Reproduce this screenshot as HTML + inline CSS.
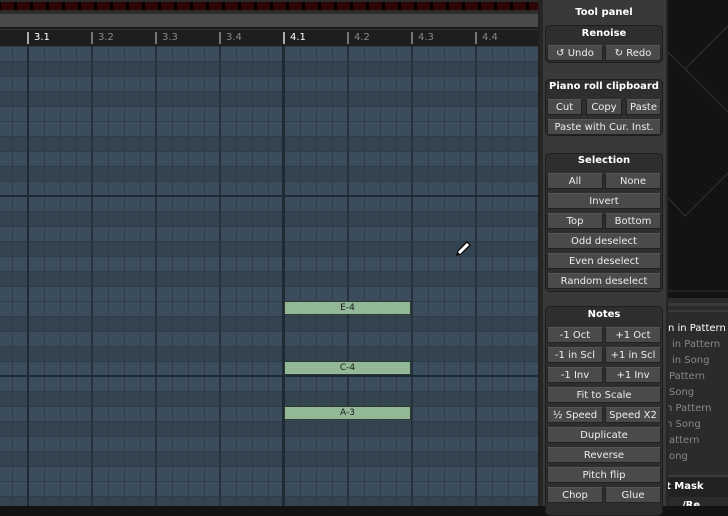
<!DOCTYPE html>
<html><head><style>
*{margin:0;padding:0;box-sizing:border-box}
body{width:728px;height:506px;overflow:hidden;background:#121312;font-family:"DejaVu Sans","Liberation Sans",sans-serif;position:relative}
.a{position:absolute}
#grid{left:0;top:46px;width:538px;height:460px;
background:
linear-gradient(#1e2a33,#1e2a33) 0 149px/100% 2px no-repeat,
linear-gradient(#1e2a33,#1e2a33) 0 329px/100% 2px no-repeat,
repeating-linear-gradient(90deg,transparent 0 282px,#1f2b34 282px 284px,transparent 284px 538px),
linear-gradient(90deg,#1f2b34 0 2px,transparent 2px) 27px 0/256px 100% repeat-x,
linear-gradient(90deg,#26323c 0 2px,transparent 2px) 27px 0/64px 100%,
linear-gradient(90deg,#2f3d49 0 1px,transparent 1px) 12px 0/16px 100%,
linear-gradient(#2f3d49 0 1px,transparent 1px) 0 0/100% 15px,
linear-gradient(#3b4d5c 0 15px,#334350 15px 30px,#3b4d5c 30px 45px,#334350 45px 60px,#3b4d5c 60px 75px,#334350 75px 90px,#3b4d5c 90px 120px,#334350 120px 135px,#3b4d5c 135px 150px,#334350 150px 165px,#3b4d5c 165px 180px) 0 150px/100% 180px;}
.note{position:absolute;left:284px;width:127px;height:14px;background:#93b898;border:1px solid #2a3a30;font-size:9px;color:#1a1a1a;text-align:center;line-height:13px;font-family:"DejaVu Sans",sans-serif}
.rl{position:absolute;top:32px;font-size:10px;color:#888}
.tk{position:absolute;top:32px;width:2px;height:12px;background:#777}
#panel{left:540px;top:0;width:128px;height:506px;background:#393939;border-left:3px solid #262626;border-right:2px solid #262626}
.box{position:absolute;left:545px;width:118px;background:#2e2e2e;border:1px solid #1e1e1e;border-radius:5px}
.t{position:absolute;left:545px;width:118px;text-align:center;color:#fff;font-weight:bold;font-size:10px}
.b{position:absolute;height:16px;background:#4a4a4a;border:1px solid #222;border-top-color:#555;color:#eee;font-size:10px;text-align:center;line-height:15px;white-space:nowrap;overflow:hidden}
.li{position:absolute;font-size:10px;color:#888;white-space:nowrap}
#pc{position:absolute;left:0;top:2px;width:728px;height:506px}
</style></head><body>
<div class="a" style="left:0;top:0;width:540px;height:12px;background:#2a2a2a"></div>
<div class="a" style="left:0;top:2px;width:540px;height:8px;background:repeating-linear-gradient(90deg,#000 0 1px,#300505 1px 14px,#000 14px 16px)"></div>
<div class="a" style="left:0;top:12px;width:540px;height:17px;background:#4a4a4a;border-top:2px solid #303030;border-bottom:2px solid #1a1a1a"></div>
<div class="a" style="left:0;top:29px;width:540px;height:17px;background:#1c1e1f;border-top:1px solid #333"></div>
<div class="tk" style="left:27px;background:#aaa"></div><div class="rl" style="left:34px;color:#fff">3.1</div>
<div class="tk" style="left:91px"></div><div class="rl" style="left:98px">3.2</div>
<div class="tk" style="left:155px"></div><div class="rl" style="left:162px">3.3</div>
<div class="tk" style="left:219px"></div><div class="rl" style="left:226px">3.4</div>
<div class="tk" style="left:283px;background:#aaa"></div><div class="rl" style="left:290px;color:#fff">4.1</div>
<div class="tk" style="left:347px"></div><div class="rl" style="left:354px">4.2</div>
<div class="tk" style="left:411px"></div><div class="rl" style="left:418px">4.3</div>
<div class="tk" style="left:475px"></div><div class="rl" style="left:482px">4.4</div>
<div id="grid" class="a"></div>
<div class="note" style="top:301px">E-4</div>
<div class="note" style="top:361px">C-4</div>
<div class="note" style="top:406px">A-3</div>
<svg class="a" style="left:454px;top:240px" width="18" height="18" viewBox="0 0 18 18"><path d="M3 15 L4 11 L13 2 L16 5 L7 14 Z" fill="#fff" stroke="#000" stroke-width="1.2"/><path d="M3 15 L5 13" stroke="#000"/></svg>
<div class="a" style="left:538px;top:0;width:2px;height:506px;background:#222"></div>
<div id="panel" class="a"></div>
<div id="pc">
<div class="t" style="top:5px">Tool panel</div>
<div class="box" style="top:23px;height:38px"></div><div class="t" style="top:26px">Renoise</div>
<div class="b" style="left:547px;top:43px;width:56px">↺ Undo</div><div class="b" style="left:605px;top:43px;width:56px">↻ Redo</div>
<div class="box" style="top:77px;height:57px"></div><div class="t" style="top:79px">Piano roll clipboard</div>
<div class="b" style="left:547px;top:97px;width:35px">Cut</div><div class="b" style="left:586px;top:97px;width:36px">Copy</div><div class="b" style="left:626px;top:97px;width:35px">Paste</div>
<div class="b" style="left:547px;top:117px;width:114px">Paste with Cur. Inst.</div>
<div class="box" style="top:151px;height:139px"></div><div class="t" style="top:153px">Selection</div>
<div class="b" style="left:547px;top:171px;width:56px">All</div><div class="b" style="left:605px;top:171px;width:56px">None</div>
<div class="b" style="left:547px;top:191px;width:114px">Invert</div>
<div class="b" style="left:547px;top:211px;width:56px">Top</div><div class="b" style="left:605px;top:211px;width:56px">Bottom</div>
<div class="b" style="left:547px;top:231px;width:114px">Odd deselect</div>
<div class="b" style="left:547px;top:251px;width:114px">Even deselect</div>
<div class="b" style="left:547px;top:271px;width:114px">Random deselect</div>
<div class="box" style="top:304px;height:210px"></div><div class="t" style="top:307px">Notes</div>
<div class="b" style="left:547px;top:325px;width:56px">-1 Oct</div><div class="b" style="left:605px;top:325px;width:56px">+1 Oct</div>
<div class="b" style="left:547px;top:345px;width:56px">-1 in Scl</div><div class="b" style="left:605px;top:345px;width:56px">+1 in Scl</div>
<div class="b" style="left:547px;top:365px;width:56px">-1 Inv</div><div class="b" style="left:605px;top:365px;width:56px">+1 Inv</div>
<div class="b" style="left:547px;top:385px;width:114px">Fit to Scale</div>
<div class="b" style="left:547px;top:405px;width:56px">½ Speed</div><div class="b" style="left:605px;top:405px;width:56px">Speed X2</div>
<div class="b" style="left:547px;top:425px;width:114px">Duplicate</div>
<div class="b" style="left:547px;top:445px;width:114px">Reverse</div>
<div class="b" style="left:547px;top:465px;width:114px">Pitch flip</div>
<div class="b" style="left:547px;top:485px;width:56px">Chop</div><div class="b" style="left:605px;top:485px;width:56px">Glue</div>
</div>
<svg class="a" style="left:668px;top:0" width="60" height="295"><path d="M0 52 L17 69 L60 26 M17 69 L60 112 M0 198 L17 216 L60 173" stroke="#333" fill="none"/><line x1="0" y1="291" x2="60" y2="291" stroke="#333"/></svg>
<div class="a" style="left:668px;top:298px;width:60px;height:208px;background:#2b2b2b;overflow:hidden">
<div class="a" style="left:0;top:5px;width:60px;height:3px;background:#3a3a3a"></div>
<div class="a" style="left:0;top:12px;width:60px;height:2px;background:#3a3a3a"></div>
<div class="li" style="left:0;top:25px;color:#fff">n in Pattern</div>
<div class="li" style="left:4px;top:41px">in Pattern</div>
<div class="li" style="left:4px;top:57px">in Song</div>
<div class="li" style="left:1px;top:73px">Pattern</div>
<div class="li" style="left:1px;top:89px">Song</div>
<div class="li" style="left:-2px;top:105px">n Pattern</div>
<div class="li" style="left:-2px;top:121px">n Song</div>
<div class="li" style="left:1px;top:137px">attern</div>
<div class="li" style="left:1px;top:153px">ong</div>
<div class="a" style="left:0;top:177px;width:60px;height:22px;background:#222;border-top:2px solid #3a3a3a"></div>
<div class="li" style="left:-2px;top:183px;color:#fff;font-weight:bold">t Mask</div>
<div class="li" style="left:14px;top:202px;color:#fff;font-weight:bold">/Re</div>
</div>
</body></html>
